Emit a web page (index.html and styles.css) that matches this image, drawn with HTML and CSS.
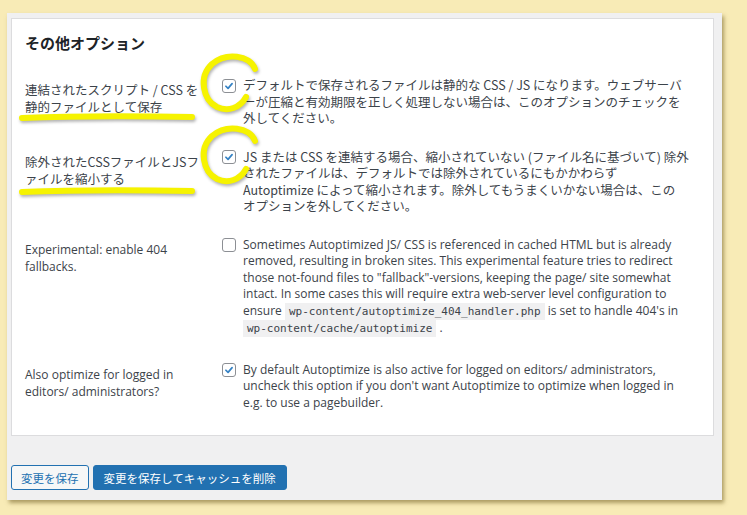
FILE: index.html
```html
<!DOCTYPE html>
<html lang="ja">
<head>
    <meta charset="UTF-8">
    <title>その他オプション</title>
    <link rel="stylesheet" href="styles.css">
</head>
<body>
    <div class="panel">
        <div class="card">
            <h2 class="title">その他オプション</h2>

            <div class="row">
                <div class="label ja">連結されたスクリプト / CSS を<br>静的ファイルとして保存</div>
                <div class="field ja">
                    <span class="check on"><svg viewBox="0 0 14 14"><path d="M3.4 7.3 L5.9 9.8 L10.6 4.2"/></svg></span>
                    <p class="desc">デフォルトで保存されるファイルは静的な CSS / JS になります。ウェブサーバ<br>ーが圧縮と有効期限を正しく処理しない場合は、このオプションのチェックを<br>外してください。</p>
                </div>
            </div>

            <div class="row">
                <div class="label ja">除外されたCSSファイルとJSフ<br>ァイルを縮小する</div>
                <div class="field ja">
                    <span class="check on"><svg viewBox="0 0 14 14"><path d="M3.4 7.3 L5.9 9.8 L10.6 4.2"/></svg></span>
                    <p class="desc">JS または CSS を連結する場合、縮小されていない (ファイル名に基づいて) 除外<br>されたファイルは、デフォルトでは除外されているにもかかわらず<br>Autoptimize によって縮小されます。除外してもうまくいかない場合は、この<br>オプションを外してください。</p>
                </div>
            </div>

            <div class="row row-tall">
                <div class="label">Experimental: enable 404<br>fallbacks.</div>
                <div class="field">
                    <span class="check"></span>
                    <p class="desc">Sometimes Autoptimized JS/ CSS is referenced in cached HTML but is already<br>removed, resulting in broken sites. This experimental feature tries to redirect<br>those not-found files to "fallback"-versions, keeping the page/ site somewhat<br>intact. In some cases this will require extra web-server level configuration to<br>ensure <code>wp-content/autoptimize_404_handler.php</code> is set to handle 404's in<br><code>wp-content/cache/autoptimize</code> .</p>
                </div>
            </div>

            <div class="row">
                <div class="label">Also optimize for logged in<br>editors/ administrators?</div>
                <div class="field">
                    <span class="check on"><svg viewBox="0 0 14 14"><path d="M3.4 7.3 L5.9 9.8 L10.6 4.2"/></svg></span>
                    <p class="desc">By default Autoptimize is also active for logged on editors/ administrators,<br>uncheck this option if you don't want Autoptimize to optimize when logged in<br>e.g. to use a pagebuilder.</p>
                </div>
            </div>
        </div>

        <div class="actions">
            <button class="btn">変更を保存</button>
            <button class="btn btn-primary">変更を保存してキャッシュを削除</button>
        </div>
    </div>

    <!-- 手書きのマーカー -->
    <svg class="marks" width="747" height="515" viewBox="0 0 747 515">
        <path d="M255 69 C250 55, 226 52, 212 64 C198 77, 203 100, 217 107 C228 112, 240 108, 246 97"/>
        <path d="M255 141 C250 127, 226 124, 212 136 C198 149, 203 172, 217 179 C228 184, 240 180, 246 169"/>
        <path d="M22 118 C70 116, 140 116, 192 117"/>
        <path d="M22 192 C70 190, 140 190, 192 191"/>
    </svg>
</body>
</html>
```

FILE: styles.css
```css
*{
    margin: 0;
    padding: 0;
    box-sizing: border-box;
}
body{
    width: 747px;
    height: 515px;
    background: #f8ebb6;
    padding: 13px 0 0 7px;
    font-family: "Open Sans", "Noto Sans CJK JP", sans-serif;
    font-size: 12px;
    color: #3c434a;
    position: relative;
    overflow: hidden;
}
.panel{
    width: 715px;
    background: #f0f0f1;
    padding: 5px 8px 10px 4px;
    box-shadow: 2px 3px 4px rgba(110,90,30,0.55);
}
.card{
    background: #fff;
    border: 1px solid #dcdcde;
    padding: 14px 13px 13px;
}
.title{
    font-family: "Noto Sans CJK JP", sans-serif;
    font-size: 15px;
    line-height: 20px;
    font-weight: bold;
    color: #1d2327;
    margin-bottom: 13px;
}
.row{
    display: flex;
}
.label{
    width: 197px;
    flex: none;
    padding-top: 15px;
    line-height: 17px;
}
.field{
    flex: 1;
    display: flex;
    align-items: flex-start;
    padding: 11px 0;
}
.row-tall .field{
    padding-bottom: 13px;
}
.ja{
    font-family: "Noto Sans CJK JP", sans-serif;
    font-size: 12.5px;
}
.desc{
    line-height: 16.5px;
    white-space: nowrap;
}
.check{
    width: 14px;
    height: 14px;
    flex: none;
    margin: 1.5px 7px 0 0;
    border: 1px solid #8c8f94;
    border-radius: 3px;
    background: #fff;
}
.check svg{
    display: block;
    width: 12px;
    height: 12px;
}
.check path{
    fill: none;
    stroke: #3582c4;
    stroke-width: 2;
    stroke-linecap: round;
    stroke-linejoin: round;
}
code{
    font-family: "DejaVu Sans Mono", monospace;
    font-size: 11px;
    background: #f0f0f1;
    padding: 2px 4px;
    color: #3c434a;
}
.actions{
    display: flex;
    gap: 4px;
    margin-top: 29px;
}
.btn{
    height: 25px;
    padding: 0 9px;
    font-family: "Noto Sans CJK JP", sans-serif;
    font-size: 11.5px;
    color: #2271b1;
    background: #f6f7f7;
    border: 1px solid #2271b1;
    border-radius: 3px;
}
.btn-primary{
    color: #fff;
    background: #2271b1;
    padding: 0 10px;
}
.marks{
    position: absolute;
    left: 0;
    top: 0;
    pointer-events: none;
    filter: drop-shadow(1px 2px 1.5px rgba(0,0,0,0.3));
}
.marks path{
    fill: none;
    stroke: #f6f300;
    stroke-width: 6;
    stroke-linecap: round;
}
```
